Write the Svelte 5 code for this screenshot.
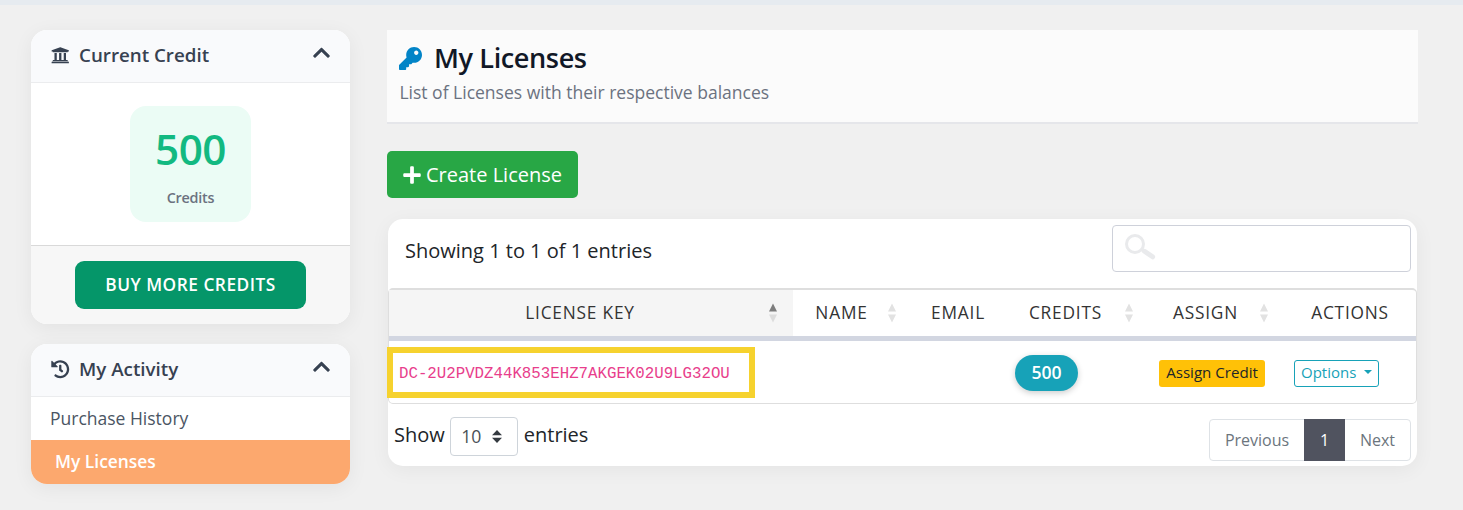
<script>
  const icons = {
    bank: { w: 512, d: 'M496 128v16a8 8 0 0 1-8 8h-24v12c0 6.627-5.373 12-12 12H60c-6.627 0-12-5.373-12-12v-12H24a8 8 0 0 1-8-8v-16a8 8 0 0 1 4.941-7.392l232-88a7.996 7.996 0 0 1 6.118 0l232 88A8 8 0 0 1 496 128zm-24 304H40c-13.255 0-24 10.745-24 24v16a8 8 0 0 0 8 8h464a8 8 0 0 0 8-8v-16c0-13.255-10.745-24-24-24zM96 192v192H60c-6.627 0-12 5.373-12 12v20h416v-20c0-6.627-5.373-12-12-12h-36V192h-64v192h-64V192h-64v192h-64V192H96z' },
    history: { w: 512, d: 'M504 255.531c.253 136.64-111.18 248.372-247.82 248.468-59.015.042-113.223-20.53-155.822-54.911-11.077-8.94-11.905-25.541-1.839-35.607l11.267-11.267c8.609-8.609 22.353-9.551 31.891-1.984C173.062 425.135 212.781 440 256 440c101.705 0 184-82.311 184-184 0-101.705-82.311-184-184-184-48.814 0-93.149 18.969-126.068 49.932l50.754 50.754c10.08 10.08 2.941 27.314-11.313 27.314H24c-8.837 0-16-7.163-16-16V38.627c0-14.254 17.234-21.393 27.314-11.314l49.372 49.372C129.209 34.136 189.552 8 256 8c136.81 0 247.747 110.78 248 247.531zm-180.912 78.784l9.823-12.63c8.138-10.463 6.253-25.542-4.21-33.679L288 256.349V152c0-13.255-10.745-24-24-24h-16c-13.255 0-24 10.745-24 24v135.651l65.409 50.874c10.463 8.137 25.541 6.253 33.679-4.21z' },
    key: { w: 512, d: 'M512 176.001C512 273.203 433.202 352 336 352c-11.22 0-22.19-1.062-32.827-3.069l-24.012 27.014A23.999 23.999 0 0 1 261.223 384H224v40c0 13.255-10.745 24-24 24h-40v40c0 13.255-10.745 24-24 24H24c-13.255 0-24-10.745-24-24v-78.059c0-6.365 2.529-12.47 7.029-16.971l161.802-161.802C163.108 213.814 160 195.271 160 176 160 78.798 238.797.001 335.999 0 433.488-.001 512 78.511 512 176.001zM336 128c0 26.51 21.49 48 48 48s48-21.49 48-48-21.49-48-48-48-48 21.49-48 48z' },
    plus: { w: 448, d: 'M416 208H272V64c0-17.67-14.33-32-32-32h-32c-17.67 0-32 14.33-32 32v144H32c-17.67 0-32 14.33-32 32v32c0 17.67 14.33 32 32 32h144v144c0 17.67 14.33 32 32 32h32c17.67 0 32-14.33 32-32V304h144c17.67 0 32-14.33 32-32v-32c0-17.67-14.33-32-32-32z' },
    chevron: { w: 448, d: 'M240.971 130.524l194.343 194.343c9.373 9.373 9.373 24.569 0 33.941l-22.667 22.667c-9.357 9.357-24.522 9.375-33.901.04L224 227.495 69.255 381.516c-9.379 9.335-24.544 9.317-33.901-.04l-22.667-22.667c-9.373-9.373-9.373-24.569 0-33.941L207.03 130.525c9.372-9.373 24.568-9.373 33.941-.001z' }
  };
  const columns = [
    { label: 'LICENSE KEY', sort: 'asc' },
    { label: 'NAME', sort: 'both' },
    { label: 'EMAIL' },
    { label: 'CREDITS', sort: 'both' },
    { label: 'ASSIGN', sort: 'both' },
    { label: 'ACTIONS' }
  ];
</script>

{#snippet icon(name, cls)}
  <svg class="icon {cls}" viewBox="0 0 {icons[name].w} 512" aria-hidden="true"><path d={icons[name].d} /></svg>
{/snippet}

<div class="strip"></div>
<div class="page">
  <aside class="sidebar">
    <section class="card">
      <header class="card-head">
        {@render icon('bank', 'i-head')}
        <span class="card-title">Current Credit</span>
        {@render icon('chevron', 'i-chev')}
      </header>
      <div class="credit-body">
        <div class="credit-box">
          <div class="credit-num">500</div>
          <div class="credit-label">Credits</div>
        </div>
      </div>
      <footer class="card-foot"><button class="buy">BUY MORE CREDITS</button></footer>
    </section>

    <section class="card">
      <header class="card-head">
        {@render icon('history', 'i-head')}
        <span class="card-title">My Activity</span>
        {@render icon('chevron', 'i-chev')}
      </header>
      <nav>
        <div class="nav-item">Purchase History</div>
        <div class="nav-item active">My Licenses</div>
      </nav>
    </section>
  </aside>

  <main class="main">
    <header class="page-head">
      <div class="title-row">{@render icon('key', 'i-key')}<h1>My Licenses</h1></div>
      <p>List of Licenses with their respective balances</p>
    </header>
    <button class="create">{@render icon('plus', 'i-plus')}<span>Create License</span></button>

    <section class="panel">
      <div class="top-bar">
        <span class="info">Showing 1 to 1 of 1 entries</span>
        <div class="search">
          <svg class="magnifier" viewBox="0 0 32 28" aria-hidden="true">
            <circle cx="10" cy="10" r="8.5" fill="none" stroke="#e9eaec" stroke-width="3" />
            <path d="M16.5 15.5 L19 17.2" stroke="#e9eaec" stroke-width="3" />
            <path d="M19.5 17.3 L27.6 22.8" stroke="#e9eaec" stroke-width="5" stroke-linecap="round" />
          </svg>
        </div>
      </div>

      <div class="table">
        <div class="grid head">
          {#each columns as col}
            <div class="th" class:sortable={col.sort} class:sorted={col.sort === 'asc'}>
              <span>{col.label}</span>
              {#if col.sort}
                <svg class="sort" viewBox="0 0 8 20" aria-hidden="true">
                  <path d="M4 0.5 L8 8.5 H0 Z" fill={col.sort === 'asc' ? '#7d7d7d' : '#e2e2e2'} />
                  <path d="M4 19.5 L8 11.5 H0 Z" fill={col.sort === 'asc' ? '#dcdcdc' : '#e2e2e2'} />
                </svg>
              {/if}
            </div>
          {/each}
        </div>
        <div class="grid row">
          <div class="td key-cell"><div class="highlight"><code>DC-2U2PVDZ44K853EHZ7AKGEK02U9LG32OU</code></div></div>
          <div class="td"></div>
          <div class="td"></div>
          <div class="td"><span class="pill">500</span></div>
          <div class="td"><button class="assign">Assign Credit</button></div>
          <div class="td"><button class="options"><span>Options</span><i class="caret"></i></button></div>
        </div>
      </div>

      <div class="bottom-bar">
        <div class="length">
          <span>Show</span>
          <div class="select">
            <span>10</span>
            <svg viewBox="0 0 10 13" aria-hidden="true"><path d="M5 0 L10 5.2 H0 Z M5 13 L10 7.8 H0 Z" fill="#343a40" /></svg>
          </div>
          <span>entries</span>
        </div>
        <div class="pager">
          <span class="prev">Previous</span>
          <span class="current">1</span>
          <span class="next">Next</span>
        </div>
      </div>
    </section>
  </main>
</div>

<style>
  :global(body) { background: #f0f0f0; font-family: "Open Sans", sans-serif; color: #212529; overflow: hidden; }
  div, span, button, header, footer, section, h1, p { box-sizing: border-box; }
  button { font-family: inherit; border: 0; padding: 0; white-space: nowrap; }
  .icon { display: block; fill: currentColor; flex: none; }
  .strip { height: 5px; background: #e6ebf0; }
  .page { display: flex; gap: 37px; padding: 25px 45px 0 31px; height: 505px; box-sizing: border-box; }
  .sidebar { width: 319px; flex: none; display: flex; flex-direction: column; gap: 20px; }
  .card { border-radius: 16px; background: #fff; overflow: hidden; box-shadow: 0 4px 20px rgba(0, 0, 0, .06); }
  .card-head { height: 53px; display: flex; align-items: center; padding: 0 20px; background: #f9fafc; border-bottom: 1px solid #ebecee; color: #374151; }
  .i-head { width: 18.5px; height: 18.5px; margin: -1px 9.5px 0 0; }
  .card-title { flex: 1; font-size: 18.75px; font-weight: 600; line-height: 24px; margin-top: -2px; }
  .i-chev { width: 17px; height: 19.5px; margin-top: -6px; }
  .credit-body { height: 162px; display: flex; justify-content: center; padding-top: 23px; }
  .credit-box { width: 121px; height: 116px; border-radius: 16px; background: #ebfcf5; text-align: center; }
  .credit-num { font-size: 42.3px; line-height: 50px; padding-top: 18px; font-weight: 600; color: #12b981; letter-spacing: -.5px; }
  .credit-label { font-size: 14.4px; line-height: 20px; margin-top: 14px; font-weight: 600; color: #6b7280; letter-spacing: -.25px; }
  .card-foot { height: 79px; border-top: 1px solid #d9d9d9; background: #f7f7f7; display: flex; justify-content: center; padding-top: 15px; }
  .buy { width: 231px; height: 48px; border-radius: 9px; background: #059669; color: #fff; font-size: 17.3px; font-weight: 600; letter-spacing: .5px; padding-bottom: 1px; }
  .nav-item { height: 43px; line-height: 43px; padding-left: 19px; font-size: 17.5px; color: #4b5563; }
  .nav-item.active { height: 44px; background: #fca86e; color: #fff; font-weight: 600; padding-left: 24px; font-size: 17.4px; }
  .main { width: 1031px; flex: none; display: flex; flex-direction: column; align-items: flex-start; }
  .page-head { width: 100%; height: 94px; background: #fbfbfb; border-bottom: 2px solid #e5e6ea; padding: 10px 12px; }
  .title-row { display: flex; align-items: center; gap: 12px; height: 37px; color: #0284c7; }
  .i-key { width: 23px; height: 23px; }
  h1 { margin: -2px 0 0; color: #111827; font-size: 27.1px; line-height: 36px; font-weight: 600; letter-spacing: -.4px; }
  p { margin: 3px 0 0 .4px; font-size: 17.53px; line-height: 24px; color: #6b7280; }
  .create { display: flex; align-items: center; gap: 5px; width: 191px; height: 47px; margin-top: 27px; padding-left: 16px; border-radius: 5px; background: #28a745; color: #fff; font-size: 20px; }
  .i-plus { width: 18px; height: 20px; }
  .panel { width: 1029px; height: 247px; margin: 21px 0 0 1px; background: #fff; border-radius: 15px; box-shadow: 0 4px 20px rgba(0, 0, 0, .05); }
  .top-bar { height: 69px; display: flex; justify-content: space-between; padding: 6px 6px 0 17px; }
  .info { font-size: 20px; line-height: 52px; }
  .search { width: 299px; height: 47px; border: 1px solid #ced1da; border-radius: 4px; padding: 8px 0 0 12px; }
  .magnifier { width: 32px; height: 28px; display: block; }
  .table { height: 116px; border: 1px solid #dedede; border-top-width: 2px; border-radius: 5px; }
  .grid { display: grid; grid-template-columns: 404px 119px 92px 145px 135px 132px; }
  .head { height: 51px; border-bottom: 5px solid #d2d6e1; }
  .th { position: relative; display: flex; align-items: center; justify-content: center; font-size: 17.3px; letter-spacing: .8px; color: #333; padding-bottom: 1px; }
  .th.sortable { padding-right: 22px; }
  .sorted { background: #f5f5f5; }
  .sort { position: absolute; right: 16px; top: 13px; width: 8px; height: 20px; }
  .row { height: 64px; }
  .td { display: flex; align-items: center; padding-left: 10px; }
  .key-cell { padding: 0; }
  .highlight { width: 368px; height: 51px; flex: none; margin: -2px 0 0 -2px; border: 6px solid #f6d22e; background: #fff; display: flex; align-items: center; padding: 4px 0 0 6px; }
  code { font-family: "Liberation Mono", monospace; font-size: 15.75px; color: #e83e8c; }
  .pill { width: 63px; height: 36px; margin-left: 1px; border-radius: 18px; background: #17a2b8; color: #fff; font-size: 17.6px; font-weight: 600; line-height: 35px; text-align: center; box-shadow: 0 2px 6px rgba(0, 0, 0, .2); }
  .assign { width: 106px; height: 27px; border-radius: 3px; background: #ffc107; color: #212529; font-size: 15.1px; padding-bottom: 2px; }
  .options { width: 85px; height: 27px; border: 1px solid #17a2b8; border-radius: 3px; background: #fff; color: #17a2b8; font-size: 15px; display: flex; align-items: center; padding: 0 0 2px 6px; }
  .caret { margin: 0 0 0 8px; border: 4px solid transparent; border-top-color: #17a2b8; border-bottom: 0; }
  .bottom-bar { display: flex; justify-content: space-between; padding: 13px 6px 0; }
  .length { display: flex; gap: 5.5px; font-size: 20px; line-height: 36px; }
  .select { width: 68px; height: 39px; border: 1px solid #ced4da; border-radius: 4px; display: flex; align-items: center; gap: 11px; padding-left: 10px; font-size: 17.6px; color: #495057; }
  .select span { margin-top: -2px; }
  .select svg { width: 10px; height: 13px; }
  .pager { height: 42px; margin-top: 2px; display: flex; border: 1px solid #dee2e6; border-radius: 4px; font-size: 16px; line-height: 40px; color: #6c757d; text-align: center; }
  .prev { width: 94px; }
  .current { width: 41px; height: 42px; line-height: 42px; margin-top: -1px; background: #50535f; color: #fff; }
  .next { width: 65px; }
</style>
